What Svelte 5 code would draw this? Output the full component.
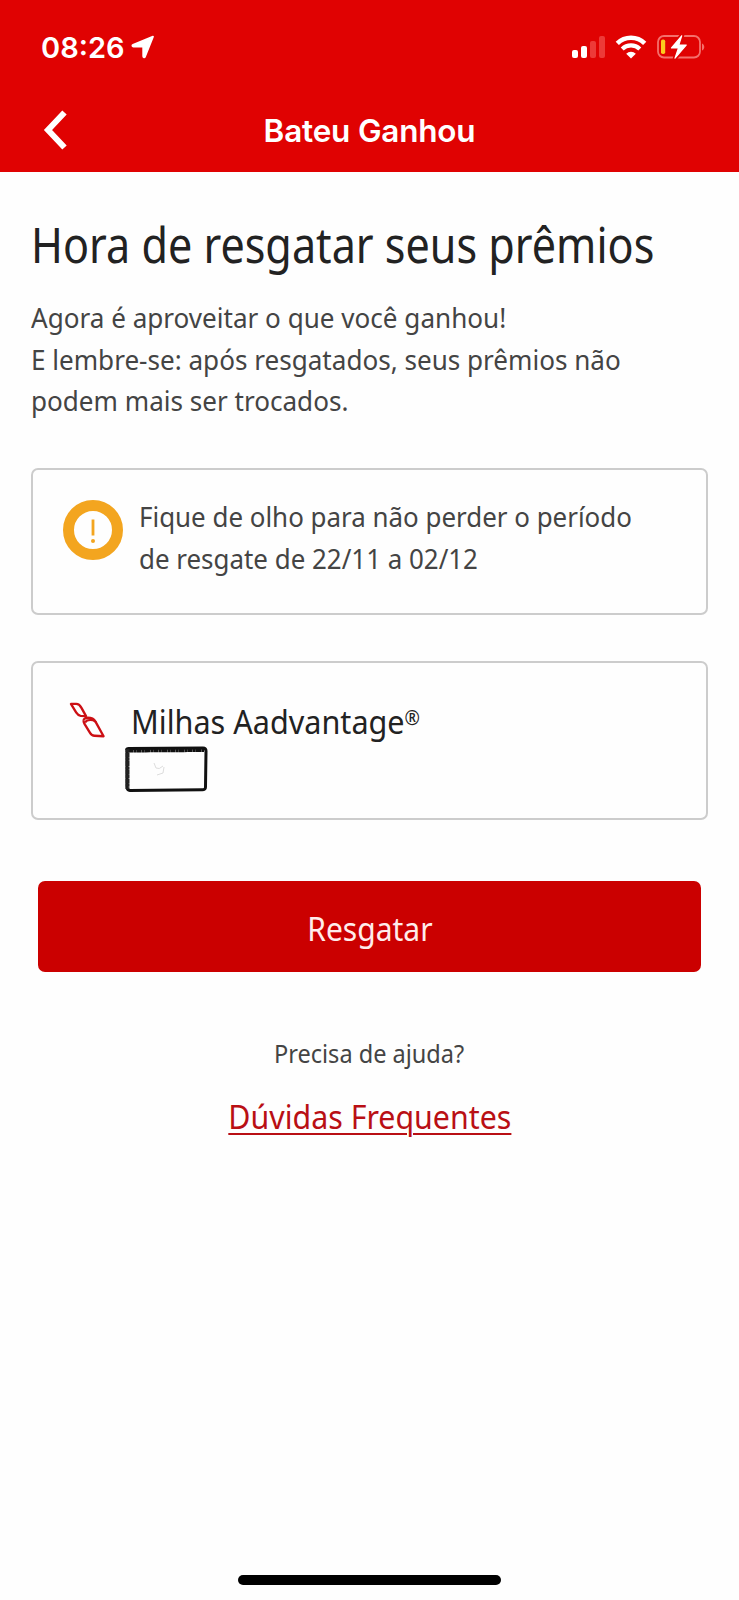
<script>
  const bars = [
    { height: 8, active: true },
    { height: 12, active: true },
    { height: 17, active: false },
    { height: 22, active: false },
  ]
</script>

<div class="screen">
  <header class="header">
    <div class="status-bar">
      <div class="clock">
        <span class="time">08:26</span>
        <svg class="location" viewBox="0 0 24 24" fill="#fff" stroke="#fff" stroke-width="1.800" stroke-linejoin="round">
          <path d="M22 1.700L14 21.600c-.4 1-1.800.8-1.800-.3V12.400c0-.5-.3-.8-.8-.8H2.400c-1.200 0-1.400-1.300-.4-1.700z" />
        </svg>
      </div>
      <div class="indicators">
        <div class="signal">
          {#each bars as bar}
            <span class="bar" class:active={bar.active} style="height: {bar.height}px"></span>
          {/each}
        </div>
        <svg class="wifi" viewBox="0 0 32 24" fill="none" stroke="#fff">
          <path d="M2.300 8.300a19.500 19.500 0 0 1 27.400 0" stroke-width="4.600" />
          <path d="M7.200 13.900a12.700 12.700 0 0 1 17.600 0" stroke-width="4.200" />
          <path d="M16 23.500l-4.800-4.800a6.800 6.800 0 0 1 9.600 0z" fill="#fff" stroke="none" />
        </svg>
        <svg class="battery" viewBox="0 0 50 26">
          <rect x="2" y="2" width="42" height="21.500" rx="6" fill="none" stroke="#f4706c" stroke-width="1.800" />
          <path d="M46 9.500c3 1.200 3 5.800 0 7z" fill="#f4706c" />
          <rect x="5" y="5.500" width="4.200" height="14.500" rx="1.800" fill="#fccb1e" />
          <path d="M26.500 .5L14.800 14.300h6.900l-3.200 10.900L30.700 10.700h-7.200z" fill="#fff" stroke="#e00202" stroke-width="4" />
          <path d="M25.700 1.800L15.500 14h7l-3.500 10.200L30.200 11h-7.400z" fill="#fff" stroke="#fff" stroke-width="1.200" stroke-linejoin="round" />
        </svg>
      </div>
    </div>
    <nav class="nav-bar">
      <button class="back-btn" aria-label="Voltar">
        <svg viewBox="0 0 24 40" fill="none" stroke="#fff" stroke-width="6">
          <path d="M21.500 2.500L5 20l16.500 17.500" />
        </svg>
      </button>
      <span class="nav-title">Bateu Ganhou</span>
    </nav>
  </header>

  <main class="content">
    <h1>Hora de resgatar seus prêmios</h1>
    <p class="intro">
      Agora é aproveitar o que você ganhou!<br />
      E lembre-se: após resgatados, seus prêmios não<br />
      podem mais ser trocados.
    </p>

    <section class="card notice">
      <svg class="notice-icon" viewBox="0 0 60 60">
        <circle cx="30" cy="30" r="24.500" fill="none" stroke="#f3a51f" stroke-width="11" />
        <path d="M30 19.500v16" stroke="#f3a51f" stroke-width="2.800" />
        <circle cx="30" cy="41" r="2" fill="#f3a51f" />
      </svg>
      <p>
        Fique de olho para não perder o período<br />
        de resgate de 22/11 a 02/12
      </p>
    </section>

    <section class="card prize">
      <svg class="prize-icon" viewBox="0 0 38 38" fill="none" stroke="#cc0f14" stroke-width="2.400" stroke-linejoin="round">
        <path d="M2 3h5.500c2.600 0 4 1.800 5.300 4l4.700 8.500L12 15.200c-2-.2-3.500-1.500-4.700-3.400z" />
        <path d="M15 20.500c-.2-2.200 2-3.300 4.200-3.300 3.400 0 6.300 1 8 4-2.500-1.800-5-2-7.200-1.500-1.800.3-2.800 1.200-3.400 2.500" />
        <path d="M15 20.500c0 1.500.7 2.500 1.400 3.800l5.200 8.500c1.200 2 2.400 2.900 4.600 2.900l9.300.5-8.300-15" />
      </svg>
      <div class="prize-info">
        <span class="prize-name">Milhas Aadvantage<span class="reg">®</span></span>
        <svg class="amount" viewBox="0 0 84 48" fill="none">
          <path d="M3 4Q2 2.500 5 2.400L79 2Q82 2 82 5L81.500 41Q81.500 44 78 43.800L6 44.400Q3 44.500 3 41z" stroke="#111" stroke-width="3" />
          <path d="M4 4L80 3.500" stroke="#111" stroke-width="5" stroke-dasharray="5 .3 3 .2" />
          <path d="M3.500 3v40" stroke="#222" stroke-width="4" stroke-dasharray="3 .4 5 .3" />
          <path d="M30 17l2 5q3 2 7-2M40 21l-1 6-6 2" stroke="#ddd" stroke-width="1" />
        </svg>
      </div>
    </section>

    <button class="redeem-btn"><span>Resgatar</span></button>

    <div class="help">
      <p>Precisa de ajuda?</p>
      <a href="#faq">Dúvidas Frequentes</a>
    </div>
  </main>

  <div class="home-indicator"></div>
</div>

<style>
  :global(body) {
    background: #fefefe;
  }

  .screen {
    height: 1600px;
    box-sizing: border-box;
    display: flex;
    flex-direction: column;
    font-family: "Noto Sans", sans-serif;
    color: #444;
    background: #fefefe;
  }

  .header {
    height: 172px;
    flex: none;
    background: #e00202;
    color: #fff;
    font-family: Inter, sans-serif;
  }

  .status-bar {
    height: 94px;
    box-sizing: border-box;
    padding: 0 33px 0 41px;
    display: flex;
    align-items: center;
    justify-content: space-between;
  }

  .clock {
    display: flex;
    align-items: center;
    gap: 7px;
  }

  .time {
    width: 83px;
    font-size: 29px;
    font-weight: 600;
    white-space: nowrap;
  }

  .location {
    width: 24px;
    height: 24px;
  }

  .indicators {
    display: flex;
    align-items: center;
  }

  .signal {
    display: flex;
    align-items: flex-end;
    gap: 3px;
    height: 22px;
    margin-right: 10px;
  }

  .bar {
    width: 6px;
    border-radius: 2px;
    background: #ed3a38;
  }

  .bar.active {
    background: #fff;
  }

  .wifi {
    width: 32px;
    height: 24px;
    margin-right: 9px;
  }

  .battery {
    width: 50px;
    height: 26px;
  }

  .nav-bar {
    height: 78px;
    box-sizing: border-box;
    padding-bottom: 6px;
    display: grid;
    grid-template-columns: 100px 1fr 100px;
    align-items: center;
  }

  .back-btn {
    width: 24px;
    height: 40px;
    margin: -1px 0 0 43px;
    padding: 0;
    border: none;
    background: none;
    cursor: pointer;
  }

  .back-btn svg {
    display: block;
    width: 24px;
    height: 40px;
  }

  .nav-title {
    text-align: center;
    font-size: 31.500px;
    font-weight: 600;
    letter-spacing: -0.2px;
    white-space: nowrap;
  }

  .content {
    flex: 1;
    padding: 0 31px;
    white-space: nowrap;
  }

  /* the brand face is narrower than Noto Sans */
  h1 {
    margin: 40px 0 0;
    font-size: 49px;
    line-height: 64px;
    font-weight: 400;
    transform: scaleX(0.88);
    transform-origin: left;
    color: #222;
  }

  p {
    margin: 0;
    font-size: 27px;
    line-height: 41.700px;
    transform: scaleX(0.966);
    transform-origin: left;
  }

  .intro {
    margin-top: 21px;
  }

  .card {
    box-sizing: border-box;
    border: 2px solid #ccc;
    border-radius: 7px;
    display: flex;
    align-items: flex-start;
  }

  .notice {
    height: 147px;
    margin-top: 46px;
    padding: 26px 30px;
  }

  .notice p {
    transform: scaleX(0.96);
  }

  .notice-icon {
    width: 60px;
    height: 60px;
    flex: none;
    margin: 4px 16px 0 0;
  }

  .prize {
    height: 159px;
    margin-top: 46px;
    padding: 37px 36px;
  }

  .prize-icon {
    width: 37px;
    height: 37px;
    flex: none;
    margin-top: 1px;
  }

  .prize-info {
    display: flex;
    flex-direction: column;
    margin-left: 25px;
  }

  .prize-name {
    font-size: 33px;
    line-height: 44px;
    transform: scaleX(0.927);
    transform-origin: left;
    color: #222;
  }

  .reg {
    font-size: 20px;
    line-height: 0;
    vertical-align: 9px;
  }

  .amount {
    width: 84px;
    height: 48px;
    margin: 2px 0 0 -7px;
  }

  .redeem-btn {
    display: block;
    width: 663px;
    height: 91px;
    margin: 61px auto 0;
    padding: 3px 0 0;
    border: none;
    border-radius: 7px;
    background: #cb0000;
    color: #ffeceb;
    font-family: inherit;
    font-size: 33px;
    cursor: pointer;
  }

  .redeem-btn span {
    display: inline-block;
    transform: scaleX(0.91);
  }

  .help {
    display: flex;
    flex-direction: column;
    align-items: center;
    margin-top: 61px;
  }

  .help p {
    font-size: 26px;
    transform: scaleX(0.905);
    transform-origin: center;
  }

  .help a {
    margin-top: 19px;
    font-size: 33px;
    line-height: 46px;
    transform: scaleX(0.92);
    color: #b90f14;
    text-decoration: underline;
    text-decoration-thickness: 2px;
    text-underline-offset: 4px;
  }

  .home-indicator {
    width: 263px;
    height: 10px;
    margin: 0 auto 15px;
    border-radius: 5px;
    background: #000;
  }
</style>
